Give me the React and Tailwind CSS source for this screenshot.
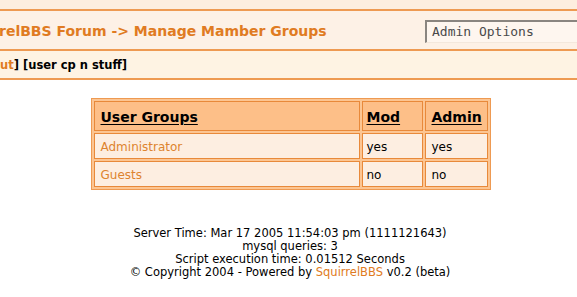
export default function App() {
  const rows = [
    { name: 'Administrator', mod: 'yes', admin: 'yes' },
    { name: 'Guests', mod: 'no', admin: 'no' },
  ]
  return (
    <div className="w-[577px] h-[297px] overflow-hidden bg-white font-['DejaVu_Sans',Verdana,sans-serif]">
      <div className="h-[9px] bg-[#fdeedf]" />
      <div className="border-y-2 border-[#ee9a52] bg-[#fdf1e6] h-[42px] flex items-center justify-between">
        <div className="text-[14px] font-bold text-[#e07b22] whitespace-nowrap -ml-px pt-[2px]">
          relBBS Forum -&gt; Manage Mamber Groups
        </div>
        <div className="mt-[2px] w-[152px] h-[23px] border-t-2 border-l-2 border-[#8a8580] border-b border-b-[#f4e8dc] bg-[#fef6ef] pl-[5px] flex items-center font-['DejaVu_Sans_Mono',monospace] text-[13px] text-[#4a4a4a] whitespace-nowrap">
          Admin Options
        </div>
      </div>
      <div className="border-b-2 border-[#ee9a52] bg-[#fef3e3] h-[29px] pt-[3px] flex items-center text-[11.5px] font-bold text-black whitespace-nowrap">
        <span className="text-[#e07b22]">ut</span>] [user cp n stuff]
      </div>
      <div className="flex justify-center pt-[18px] pl-[4px]">
        <table className="w-[400px] border border-[#ee9a52] bg-[#fcc592] border-separate border-spacing-[2px] text-[12px]">
          <thead>
            <tr>
              <th className="h-[30px] border border-[#e8893a] bg-[#fdbf88] text-left pl-[6px] pt-[2px] text-[14px] font-bold">
                <span className="underline underline-offset-2">User Groups</span>
              </th>
              <th className="w-[61px] border border-[#e8893a] bg-[#fdbf88] text-left pl-[4px] pt-[2px] text-[14px] font-bold">
                <span className="underline underline-offset-2">Mod</span>
              </th>
              <th className="w-[63px] border border-[#e8893a] bg-[#fdbf88] text-left pl-[6px] pt-[2px] text-[14px] font-bold">
                <span className="underline underline-offset-2">Admin</span>
              </th>
            </tr>
          </thead>
          <tbody>
            {rows.map(r => (
              <tr key={r.name}>
                <td className="h-[26px] border border-[#e8893a] bg-[#fdeee1] pl-[6px] pt-[2px] pb-0 text-[#dd842f]">{r.name}</td>
                <td className="border border-[#e8893a] bg-[#fdeee1] pl-[4px] pt-[2px]">{r.mod}</td>
                <td className="border border-[#e8893a] bg-[#fdeee1] pl-[6px] pt-[2px]">{r.admin}</td>
              </tr>
            ))}
          </tbody>
        </table>
      </div>
      <div className="mt-[37px] pl-[3px] text-center text-[11.5px] leading-[13px] text-black">
        <div>Server Time: Mar 17 2005 11:54:03 pm (1111121643)</div>
        <div>mysql queries: 3</div>
        <div>Script execution time: 0.01512 Seconds</div>
        <div>© Copyright 2004 - Powered by <span className="text-[#e07b22]">SquirrelBBS</span> v0.2 (beta)</div>
      </div>
    </div>
  )
}
